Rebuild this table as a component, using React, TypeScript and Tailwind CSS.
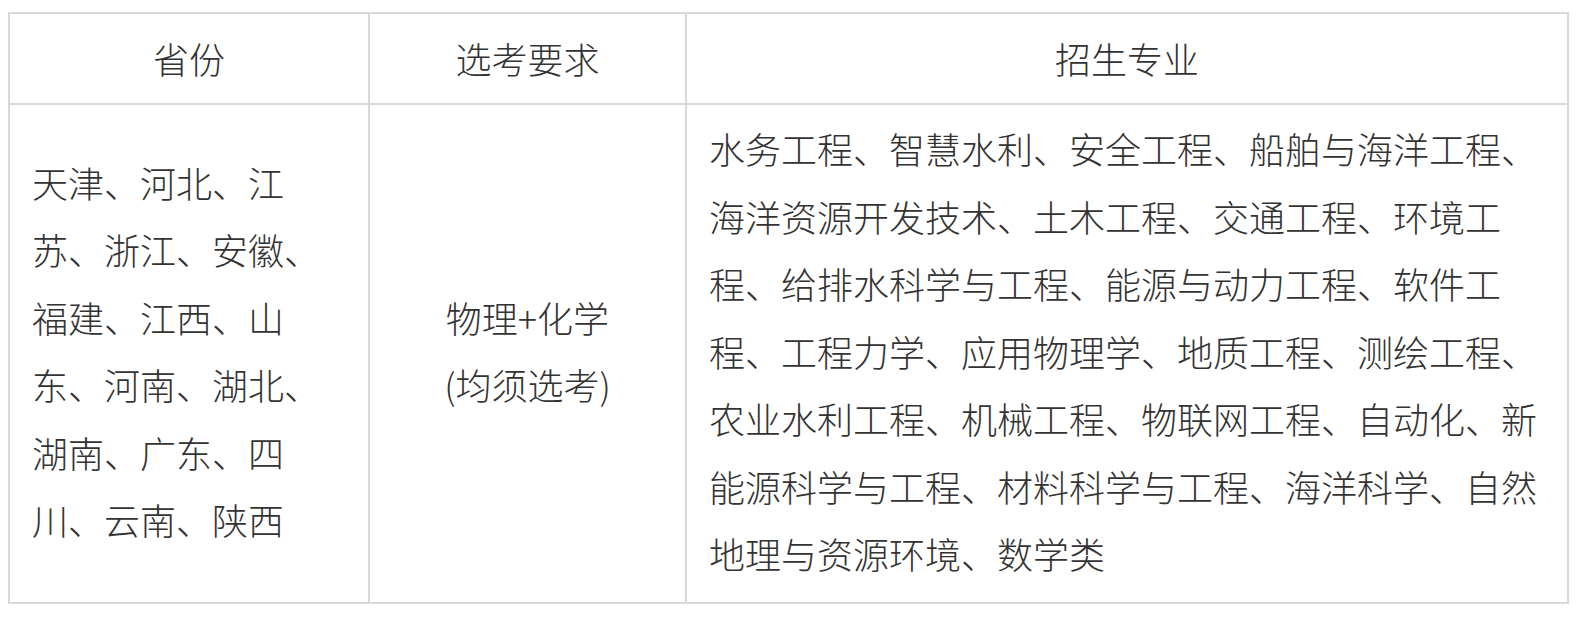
import React from "react";

const font = { fontFamily: '"Noto Sans CJK SC", "Noto Sans", sans-serif' };

export default function App() {
  return (
    <div className="bg-white w-[1580px] h-[618px] pt-[12px] pl-[8px]" style={font}>
      <table className="table-fixed border-collapse w-[1559px] text-[36px] leading-[67.5px] text-[#333333] font-light">
        <colgroup>
          <col className="w-[360px]" />
          <col className="w-[317px]" />
          <col className="w-[882px]" />
        </colgroup>
        <thead>
          <tr>
            <th className="border-2 border-[#d9d9d9] font-light text-center py-[10.5px] px-[22px]">省份</th>
            <th className="border-2 border-[#d9d9d9] font-light text-center py-[10.5px] px-[22px]">选考要求</th>
            <th className="border-2 border-[#d9d9d9] font-light text-center py-[10.5px] px-[22px]">招生专业</th>
          </tr>
        </thead>
        <tbody>
          <tr>
            <td className="border-2 border-[#d9d9d9] align-middle text-left pt-[10.5px] pb-[14.5px] px-[22px]">
              天津、河北、江苏、浙江、安徽、福建、江西、山东、河南、湖北、湖南、广东、四川、云南、陕西
            </td>
            <td className="border-2 border-[#d9d9d9] align-middle text-center pt-[10.5px] pb-[14.5px] px-[22px]">
              物理+化学
              <br />
              (均须选考)
            </td>
            <td className="border-2 border-[#d9d9d9] align-middle text-left pt-[10.5px] pb-[14.5px] px-[22px]">
              水务工程、智慧水利、安全工程、船舶与海洋工程、海洋资源开发技术、土木工程、交通工程、环境工程、给排水科学与工程、能源与动力工程、软件工程、工程力学、应用物理学、地质工程、测绘工程、农业水利工程、机械工程、物联网工程、自动化、新能源科学与工程、材料科学与工程、海洋科学、自然地理与资源环境、数学类
            </td>
          </tr>
        </tbody>
      </table>
    </div>
  );
}
